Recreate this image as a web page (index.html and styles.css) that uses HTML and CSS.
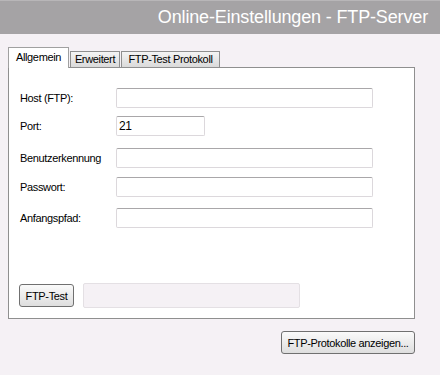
FILE: index.html
```html
<!DOCTYPE html>
<html>
<head>
<meta charset="utf-8">
<link rel="stylesheet" href="styles.css">
</head>
<body>
<div class="header"><span class="title">Online-Einstellungen - FTP-Server</span></div>
<div class="main">
  <div class="tabs">
    <div class="tab active">Allgemein</div>
    <div class="tab t-erw">Erweitert</div>
    <div class="tab t-prot">FTP-Test Protokoll</div>
  </div>
  <div class="panel">
    <div class="row r-host"><label class="lbl">Host (FTP):</label><div class="field wide"></div></div>
    <div class="row r-port"><label class="lbl">Port:</label><div class="field narrow">21</div></div>
    <div class="row r-user"><label class="lbl">Benutzerkennung</label><div class="field wide"></div></div>
    <div class="row r-pass"><label class="lbl">Passwort:</label><div class="field wide"></div></div>
    <div class="row r-path"><label class="lbl">Anfangspfad:</label><div class="field wide"></div></div>
    <div class="testrow">
      <button class="btn test">FTP-Test</button>
      <div class="status"></div>
    </div>
  </div>
  <div class="footer">
    <button class="btn show">FTP-Protokolle anzeigen...</button>
  </div>
</div>
</body>
</html>
```
FILE: styles.css
```css
html, body {
  margin: 0;
  padding: 0;
  background: #f5f1f5;
  font-family: "Liberation Sans", Arial, sans-serif;
  font-size: 11px;
  letter-spacing: -0.35px;
  color: #000;
}
.header {
  height: 33px;
  background: #a5a3a5;
  border-top: 1px solid #b8b6b8;
  display: flex;
  align-items: center;
  justify-content: flex-end;
  padding-right: 12px;
}
.title {
  color: #fff;
  font-size: 18px;
  letter-spacing: -0.15px;
}
.main {
  padding: 14px 0 0 8px;
  width: 407px;
}
.tabs {
  display: flex;
  align-items: flex-end;
  height: 20px;
  position: relative;
  z-index: 1;
  margin-bottom: -1px;
}
.tab {
  height: 15px;
  line-height: 15px;
  box-sizing: content-box;
  border: 1px solid #8f8f8f;
  border-bottom: none;
  background: linear-gradient(#f4f4f4, #dadada);
  margin-bottom: 1px;
  text-align: center;
  white-space: nowrap;
}
.tab.active {
  width: 59px;
  height: 20px;
  line-height: 19px;
  background: #fff;
  border-color: #a0a0a0;
  margin-bottom: 0;
}
.t-erw {
  width: 48px;
  margin-left: 1px;
}
.t-prot {
  width: 97px;
  margin-left: 1px;
}
.panel {
  background: #fff;
  border: 1px solid #8f8f8f;
  padding: 20px 0 0 11px;
  box-sizing: border-box;
  height: 252px;
}
.row {
  display: flex;
  align-items: center;
  height: 20px;
}
.r-port { margin-top: 8px; }
.r-user { margin-top: 12px; }
.r-pass { margin-top: 9px; }
.r-path { margin-top: 11px; }
.lbl {
  width: 96px;
}
.field {
  height: 20px;
  box-sizing: border-box;
  border: 1px solid #dcd8dc;
  border-top-color: #a9a7a9;
  border-radius: 2px;
  background: #fff;
  padding: 0 2px;
  line-height: 18px;
  font-size: 12px;
}
.wide { width: 257px; }
.narrow { width: 89px; }
.testrow {
  display: flex;
  align-items: center;
  margin-top: 55px;
}
.btn {
  font-family: "Liberation Sans", Arial, sans-serif;
  font-size: 11px;
  letter-spacing: -0.35px;
  color: #000;
  border: 1px solid #707070;
  border-radius: 3px;
  background: linear-gradient(#fafafa, #dedede);
  padding: 0;
  margin: 0;
  white-space: nowrap;
}
.btn.test {
  width: 55px;
  height: 23px;
  margin-left: -1px;
}
.status {
  width: 217px;
  height: 25px;
  margin-left: 9px;
  box-sizing: border-box;
  border: 1px solid #e4e0e4;
  border-radius: 2px;
  background: #f5f1f5;
}
.footer {
  display: flex;
  justify-content: flex-end;
  margin-top: 12px;
}
.btn.show {
  width: 134px;
  height: 23px;
}
```
